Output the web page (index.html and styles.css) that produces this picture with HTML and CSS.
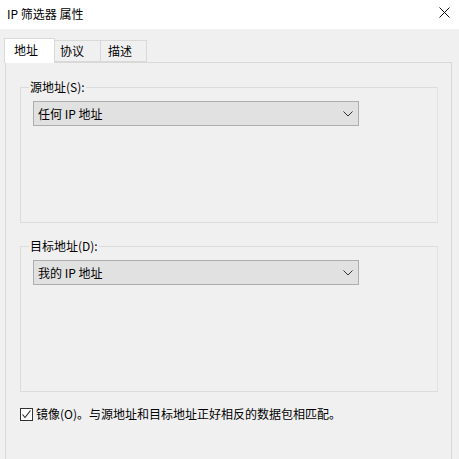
FILE: index.html
```html
<!DOCTYPE html>
<html>
<head>
	<title>IP 筛选器 属性</title>
	<link rel="stylesheet" href="styles.css">
</head>
<body>
<div class="titlebar">
  <span class="title">IP 筛选器 属性</span>
  <svg class="close" width="11" height="11" viewBox="0 0 11 11">
    <path d="M0.5 0.5 L10.5 10.5 M10.5 0.5 L0.5 10.5" stroke="#111" stroke-width="1" fill="none"/>
  </svg>
</div>
<div class="dialog">
  <div class="tabs">
    <div class="tab active">地址</div>
    <div class="tab">协议</div>
    <div class="tab last">描述</div>
  </div>
  <div class="panel">
    <fieldset class="group">
      <legend>源地址(S):</legend>
      <div class="combo">
        <span>任何 IP 地址</span>
        <svg width="10" height="6" viewBox="0 0 10 6"><polyline points="0.5,0.5 5,5 9.5,0.5" stroke="#333" fill="none"/></svg>
      </div>
    </fieldset>
    <fieldset class="group second">
      <legend>目标地址(D):</legend>
      <div class="combo">
        <span>我的 IP 地址</span>
        <svg width="10" height="6" viewBox="0 0 10 6"><polyline points="0.5,0.5 5,5 9.5,0.5" stroke="#333" fill="none"/></svg>
      </div>
    </fieldset>
    <label class="mirror">
      <span class="checkbox">
        <svg width="11" height="11" viewBox="0 0 11 11"><polyline points="1.5,5.5 4,8.5 9.5,1.5" stroke="#222" stroke-width="1.1" fill="none"/></svg>
      </span>
      镜像(O)。与源地址和目标地址正好相反的数据包相匹配。
    </label>
  </div>
</div>
</body>
</html>
```

FILE: styles.css
```css
html {
  box-sizing: border-box;
}
*,
*:before,
*:after {
  box-sizing: inherit;
}
body {
  margin: 0;
  width: 459px;
  height: 459px;
  overflow: hidden;
  background-color: #f0f0f0;
  font-family: "Noto Sans CJK SC", "Liberation Sans", sans-serif;
  font-size: 12px;
  color: #000;
}
.titlebar {
  height: 29px;
  background-color: #fff;
  display: flex;
  align-items: center;
  justify-content: space-between;
  padding: 0 9px 0 7px;
}
.title {
  line-height: 16px;
  margin-top: -1px;
}
.close {
  margin-top: -4px;
}
.dialog {
  padding: 9px 7px 0 4px;
}
.tabs {
  display: flex;
  align-items: flex-end;
  height: 24px;
  position: relative;
  z-index: 1;
}
.tab {
  height: 22px;
  width: 46px;
  line-height: 20px;
  padding-left: 5px;
  border: 1px solid #d9d9d9;
  border-left: none;
  background-color: #f0f0f0;
}
.tab.last {
  padding-left: 7px;
}
.tab.active {
  height: 25px;
  width: 51px;
  padding-left: 9px;
  line-height: 22px;
  background-color: #fff;
  border-left: 1px solid #d9d9d9;
  border-bottom: none;
  margin-bottom: -1px;
}
.panel {
  margin-left: 1px;
  height: 400px;
  border: 1px solid #d9d9d9;
  padding: 16px 13px 0 14px;
}
.group {
  margin: 0;
  height: 144px;
  padding: 0 12px;
  border: 1px solid #dcdcdc;
  border-right-color: #e3e3e3;
}
.group legend {
  margin-left: -4px;
  padding: 0 1px;
  line-height: 16px;
}
.group.second {
  margin-top: 15px;
  height: 154px;
}
.combo {
  margin-top: 6px;
  width: 326px;
  height: 25px;
  background-color: #e1e1e1;
  border: 1px solid #adadad;
  display: flex;
  align-items: center;
  justify-content: space-between;
  padding: 0 4px 0 4px;
}
.combo svg {
  margin-right: 1px;
}
.mirror {
  display: flex;
  align-items: center;
  margin-top: 14px;
  line-height: 16px;
}
.checkbox {
  width: 13px;
  height: 13px;
  border: 1px solid #333;
  background-color: #fff;
  margin-right: 3px;
  display: flex;
  align-items: center;
  justify-content: center;
}
```
